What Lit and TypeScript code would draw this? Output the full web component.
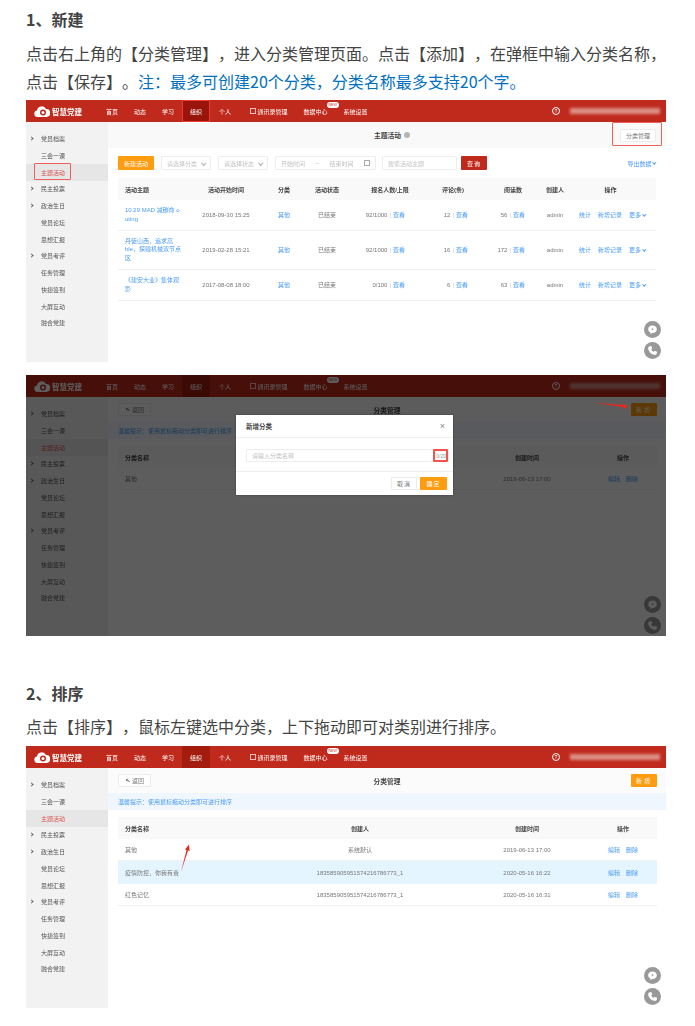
import { LitElement, html, css, svg } from "lit";
import { customElement } from "lit/decorators.js";

const MENU = [
  ["党员档案", 1], ["三会一课", 0], ["主题活动", 0], ["民主投票", 1], ["政治生日", 1], ["党员论坛", 0],
  ["思想汇报", 0], ["党员考评", 1], ["任务管理", 0], ["快捷签到", 0], ["大屏互动", 0], ["融合党建", 0],
] as const;

const ACTIVITIES = [
  { title: "10.29 MAD 减碳命 o\nuting", time: "2018-09-30 15:25", sign: "92/1000", c: "12", r: "56", cls: "h1" },
  { title: "丹徒山西，追求高\nble，探验机械双节点\n区", time: "2019-02-28 15:21", sign: "92/1000", c: "16", r: "172", cls: "h2" },
  { title: "《建安大业》集体观\n影", time: "2017-08-08 18:00", sign: "0/100", c: "6", r: "63", cls: "h3" },
];

@customElement("app-root")
export class AppRoot extends LitElement {
  static styles = css`
    :host { display: block; background: #fff; color: #333; font-family: "Liberation Sans", "Noto Sans CJK SC", sans-serif; }
    .page { padding: 5px 29px 18px 26px; width: 640px; }
    h3 { margin: 0; font-size: 16px; line-height: 28px; font-weight: 700; color: #444; font-family: "Noto Sans CJK SC", sans-serif; }
    h3.second { margin-top: 43px; }
    p { margin: 6px 0 0; font-size: 16px; line-height: 28px; color: #444; white-space: nowrap; font-family: "Noto Sans CJK SC", sans-serif; font-weight: 400; text-spacing-trim: space-all; }
    p.second { margin-top: 5px; }
    p span { color: #0070c0; }

    .shot { position: relative; width: 640px; height: 262px; overflow: hidden; font-size: 6px; color: #666; background: #fff; }
    .shot.one { margin-top: 5px; }
    .shot.two { margin-top: 13px; height: 261px; }
    .shot.three { margin-top: 6px; }
    .app { height: 100%; display: flex; flex-direction: column; filter: blur(0.5px); text-spacing-trim: space-all; }

    .top { height: 22px; flex: none; display: flex; align-items: stretch; background: #bf2a1c; color: #fff; }
    .brand { width: 72px; flex: none; display: flex; align-items: center; gap: 2px; padding-left: 8px; box-sizing: border-box; font-size: 7.5px; font-weight: 700; }
    .brand svg { width: 16px; height: 13px; flex: none; }
    .nav { padding: 0 8px; display: flex; align-items: center; position: relative; white-space: nowrap; }
    .nav.active { background: #a41c0e; }
    .nav.boxed { box-shadow: inset 0 0 0 1px #ee3b33; background: #99140a; }
    .nav.after { margin-left: 1px; }
    .nav.contacts { margin-left: 3px; gap: 2px; }
    .sq { width: 3.5px; height: 3.5px; border: 0.5px solid #fff; opacity: 0.7; }
    .new { position: absolute; right: -3px; top: 2px; width: 12px; height: 6px; border-radius: 3px; background: #fff; color: #d33; font-size: 3.5px; line-height: 6px; text-align: center; }
    .user { margin-left: auto; display: flex; align-items: center; gap: 10px; padding-right: 6px; }
    .help { width: 6px; height: 6px; border: 0.7px solid #fff; border-radius: 50%; font-size: 5px; line-height: 6px; text-align: center; }
    .redact { width: 90px; height: 6px; background: #dd8f86; filter: blur(1.5px); }

    .body { flex: 1; min-height: 0; display: flex; }
    .side { width: 82px; flex: none; background: #f2f2f2; padding-top: 8.25px; box-sizing: border-box; }
    .item { height: 16.75px; display: flex; align-items: center; padding-left: 4px; position: relative; color: #555; white-space: nowrap; }
    .slot { width: 11px; flex: none; display: flex; }
    .arrow { width: 2px; height: 2px; border-top: 0.7px solid #666; border-right: 0.7px solid #666; transform: rotate(45deg); }
    .item.active { background: #e6e6e6; color: #d9534f; }
    .redbox { position: absolute; border: 1.5px solid #f0605a; border-radius: 1px; box-sizing: border-box; pointer-events: none; }
    .box-menu { left: 8px; top: -1px; width: 37px; height: 17px; }

    .main { flex: 1; min-width: 0; display: flex; flex-direction: column; position: relative; }
    .bar { flex: none; display: grid; grid-template-columns: 1fr auto 1fr; align-items: center; background: #f9f9f9; position: relative; padding: 0 10px; }
    .bar.b1 { height: 26px; }
    .bar.b3 { height: 25px; background: #fbfbfb; }
    .title { font-size: 6.75px; font-weight: 700; color: #444; display: flex; align-items: center; gap: 3px; }
    .dot { width: 6px; height: 6px; border-radius: 50%; background: #b5b5b5; margin-right: -10px; }
    .btn { display: flex; align-items: center; justify-content: center; height: 13px; border-radius: 1px; box-sizing: border-box; white-space: nowrap; }
    .ghost { background: #fff; border: 0.7px solid #ececec; color: #777; }
    .cat { width: 36px; justify-self: end; }
    .back { width: 33px; justify-self: start; margin-top: -1px; gap: 2px; }
    .back svg { width: 5px; height: 5px; }
    .orange { background: #ff9c0f; color: #fff; }
    .add { width: 26px; justify-self: end; margin-right: -1px; margin-top: -1px; letter-spacing: 2px; }
    .box-cat { right: 4px; top: 0; width: 50px; height: 24px; }

    .filters { margin: 8px 10px 0; height: 14px; display: flex; align-items: stretch; }
    .f-new { width: 36px; height: 14px; margin-right: 7px; }
    .input { background: #fff; border: 0.7px solid #ededed; border-radius: 1px; box-sizing: border-box; color: #c2c2c2; display: flex; align-items: center; justify-content: space-between; padding: 0 5px; white-space: nowrap; }
    .sel { width: 50px; margin-right: 7px; }
    .date { width: 101px; margin-right: 6px; }
    .cal { width: 4px; height: 4px; border: 0.6px solid #aaa; }
    .kw { width: 75px; margin-right: 4px; }
    .query { width: 26px; height: 14px; background: #bf2a1c; color: #fff; letter-spacing: 1px; }
    .export { margin-left: auto; display: flex; align-items: center; gap: 2px; color: #4a9cf5; }
    .down { width: 1.6px; height: 1.6px; border-right: 0.6px solid currentColor; border-bottom: 0.6px solid currentColor; transform: rotate(45deg); margin-top: -1px; }
    .down.gray { color: #aaa; width: 2.5px; height: 2.5px; }

    .table { margin: 8px 10px 0; }
    .row { display: grid; align-items: center; border-bottom: 0.7px solid #f0f0f0; color: #777; box-sizing: border-box; }
    .t1 { grid-template-columns: 65px 86px 30px 56px 70px 56px 64px 20px 91px; }
    .t3 { grid-template-columns: 137px 210px 124px 68px; }
    .head { height: 22px; background: #f9f9f9; color: #444; font-weight: 700; border-bottom: none; }
    .c { display: flex; justify-content: center; white-space: nowrap; }
    .l { justify-content: flex-start; padding-left: 7px; }
    .h1 { height: 30.5px; } .h2 { height: 39px; } .h3 { height: 31px; }
    .rw { height: 22px; } .rw.sel-row { height: 23px; background: #e5f5ff; border-bottom: none; }
    .link { color: #4a9cf5; }
    .name { white-space: pre-line; line-height: 8.6px; color: #4a9cf5; display: block; padding-left: 7px; }
    .num { justify-content: flex-end; align-items: baseline; gap: 2px; }
    .num.p20 { padding-right: 20px; }
    .num.p13 { padding-right: 13px; }
    .sep { color: #ccc; }
    .ops { justify-content: flex-start; padding-left: 14px; gap: 7px; align-items: center; color: #4a9cf5; }
    .more { display: flex; align-items: center; gap: 2px; }
    .pair { gap: 6px; }

    .tip { flex: none; height: 17px; background: #f0f6fe; display: flex; align-items: center; padding-left: 10px; color: #4a9cf5; white-space: nowrap; }
    .table.t-tight { margin: 7px 9px 0 10px; }

    .float { position: absolute; right: 5px; top: 199px; display: flex; flex-direction: column; gap: 4px; }
    .fab { width: 17px; height: 17px; border-radius: 50%; background: #999; display: flex; align-items: center; justify-content: center; }
    .fab svg { width: 11px; height: 11px; }

    .mask { position: absolute; inset: 0; background: rgba(0, 0, 0, 0.635); }
    .modal { position: absolute; left: 210px; top: 40px; width: 217px; height: 80px; background: #fff; box-shadow: 0 0 2px rgba(0,0,0,.4); display: flex; flex-direction: column; text-spacing-trim: space-all; }
    .m-head { height: 23px; flex: none; display: flex; align-items: center; justify-content: space-between; padding: 0 8px 0 10px; border-bottom: 0.7px solid #eee; box-sizing: border-box; font-weight: 700; font-size: 6.5px; color: #444; }
    .close { font-size: 9px; font-weight: 400; color: #888; line-height: 1; }
    .m-body { height: 34px; flex: none; padding: 11px 4px 0 10px; box-sizing: border-box; border-bottom: 0.7px solid #eee; }
    .m-input { height: 13px; position: relative; padding-right: 2px; }
    .count { color: #999; font-size: 5px; }
    .box-count { right: 0; top: -1px; width: 15px; height: 13px; border: 2px solid #f4524d; }
    .m-foot { flex: 1; display: flex; justify-content: flex-end; align-items: center; gap: 3px; padding-right: 6px; }
    .m-btn { width: 26px; letter-spacing: 1px; }
    .m-ok { width: 27px; }
    .anno { position: absolute; left: 0; top: 0; width: 640px; height: 262px; pointer-events: none; }
  `;

  private top(boxed: boolean) {
    const names = ["首页", "动态", "学习"];
    return html`<div class="top">
      <div class="brand">
        <svg viewBox="0 0 32 26" aria-hidden="true">
          <path fill="#fff" d="M7 24a6.5 6.5 0 0 1-1-12.9A9.5 9.5 0 0 1 24 8a8 8 0 0 1 1 16z"/>
          <circle cx="18" cy="15" r="6" fill="#bf2a1c"/>
          <circle cx="18" cy="15" r="3" fill="#fff"/>
        </svg>
        <span>智慧党建</span>
      </div>
      ${names.map((n) => html`<div class="nav">${n}</div>`)}
      <div class="nav active ${boxed ? "boxed" : ""}">组织</div>
      <div class="nav after">个人</div>
      <div class="nav contacts"><span class="sq"></span>通讯录管理</div>
      <div class="nav">数据中心<span class="new">NEW</span></div>
      <div class="nav">系统设置</div>
      <div class="user"><span class="help">?</span><span class="redact"></span></div>
    </div>`;
  }

  private side(boxed: boolean) {
    return html`<div class="side">
      ${MENU.map(([n, arrow], i) => html`<div class="item ${i === 2 ? "active" : ""}">
        <span class="slot">${arrow ? html`<span class="arrow"></span>` : ""}</span>${n}
        ${i === 2 && boxed ? html`<span class="redbox box-menu"></span>` : ""}
      </div>`)}
    </div>`;
  }

  private fabs() {
    return html`<div class="float">
      <div class="fab"><svg viewBox="0 0 24 24"><path fill="#fff" d="M12 3c5.500 0 9.500 3.600 9.500 8.200s-4 8.200-9.500 8.200h-1l-3.500 3v-4C4.600 16.800 2.500 14.200 2.500 11.200 2.500 6.600 6.500 3 12 3z"/><circle cx="12" cy="11" r="2" fill="#999"/></svg></div>
      <div class="fab"><svg viewBox="0 0 24 24"><path fill="#fff" d="M6 2.500l3.500-.5 2 5.500-2.500 2c1 2.500 3 4.500 5.500 5.500l2-2.500 5.500 2-.5 3.500c-.5 2.500-3 4-5.500 3.500C9 20 4 15 2.500 8c-.5-2.500 1-5 3.500-5.500z"/></svg></div>
    </div>`;
  }

  private activityTable() {
    return html`<div class="table">
      <div class="row head t1">
        <div class="c l">活动主题</div><div class="c">活动开始时间</div><div class="c">分类</div><div class="c">活动状态</div>
        <div class="c">报名人数/上限</div><div class="c">评论(条)</div><div class="c">阅读数</div><div class="c">创建人</div><div class="c">操作</div>
      </div>
      ${ACTIVITIES.map((a) => html`<div class="row t1 ${a.cls}">
        <div class="name">${a.title}</div>
        <div class="c">${a.time}</div>
        <div class="c link">其他</div>
        <div class="c">已结束</div>
        <div class="c num p20">${a.sign}<span class="sep">|</span><span class="link">查看</span></div>
        <div class="c num p13">${a.c}<span class="sep">|</span><span class="link">查看</span></div>
        <div class="c num p20">${a.r}<span class="sep">|</span><span class="link">查看</span></div>
        <div class="c">admin</div>
        <div class="c ops"><span>统计</span><span>新增记录</span><span class="more">更多<span class="down"></span></span></div>
      </div>`)}
    </div>`;
  }

  private categoryMain(rows: { n: string; by: string; at: string; sel?: boolean }[]) {
    return html`<div class="main">
      <div class="bar b3">
        <div class="btn ghost back">
          <svg viewBox="0 0 10 10" aria-hidden="true"><path fill="none" stroke="#555" stroke-width="1.800" d="M8.500 8C8 5.500 6 4 3 4M5 1.500 2.500 4 5 6.500"/></svg>
          <span>返回</span>
        </div>
        <div class="title">分类管理</div>
        <div class="btn orange add">新增</div>
      </div>
      <div class="tip">温馨提示：使用鼠标拖动分类即可进行排序</div>
      <div class="table t-tight">
        <div class="row head t3"><div class="c l">分类名称</div><div class="c">创建人</div><div class="c">创建时间</div><div class="c">操作</div></div>
        ${rows.map((r) => html`<div class="row t3 rw ${r.sel ? "sel-row" : ""}">
          <div class="c l">${r.n}</div><div class="c">${r.by}</div><div class="c">${r.at}</div>
          <div class="c link pair"><span>编辑</span><span>删除</span></div>
        </div>`)}
      </div>
      ${this.fabs()}
    </div>`;
  }

  render() {
    return html`<div class="page" lang="zh-CN">
      <h3>1、新建</h3>
      <p>点击右上角的【分类管理】，进入分类管理页面。点击【添加】，在弹框中输入分类名称，<br />点击【保存】。<span>注：最多可创建20个分类，分类名称最多支持20个字。</span></p>

      <section class="shot one">
        <div class="app">
          ${this.top(true)}
          <div class="body">
            ${this.side(true)}
            <div class="main">
              <div class="bar b1">
                <span></span>
                <div class="title">主题活动<span class="dot"></span></div>
                <div class="btn ghost cat">分类管理</div>
                <span class="redbox box-cat"></span>
              </div>
              <div class="filters">
                <div class="btn orange f-new">新建活动</div>
                <div class="input sel">请选择分类<span class="down gray"></span></div>
                <div class="input sel">请选择状态<span class="down gray"></span></div>
                <div class="input date"><span>开始时间</span><span>~</span><span>结束时间</span><span class="cal"></span></div>
                <div class="input kw">搜索活动主题</div>
                <div class="btn query">查询</div>
                <div class="export">导出数据<span class="down"></span></div>
              </div>
              ${this.activityTable()}
              ${this.fabs()}
            </div>
          </div>
        </div>
      </section>

      <section class="shot two">
        <div class="app">
          ${this.top(false)}
          <div class="body">
            ${this.side(false)}
            ${this.categoryMain([{ n: "其他", by: "系统默认", at: "2019-06-13 17:00" }])}
          </div>
        </div>
        <div class="mask"></div>
        <div class="modal">
          <div class="m-head">新增分类<span class="close">×</span></div>
          <div class="m-body">
            <div class="input m-input">请输入分类名称<span class="count">0/20</span><span class="redbox box-count"></span></div>
          </div>
          <div class="m-foot">
            <div class="btn ghost m-btn">取消</div>
            <div class="btn orange m-btn m-ok">确定</div>
          </div>
        </div>
        <svg class="anno" viewBox="0 0 640 262">${svg`<polygon fill="#e8261c" points="566,27.500 597,30 597,28.500 602,32 597,34 597,32"/>`}</svg>
      </section>

      <h3 class="second">2、排序</h3>
      <p class="second">点击【排序】，鼠标左键选中分类，上下拖动即可对类别进行排序。</p>

      <section class="shot three">
        <div class="app">
          ${this.top(false)}
          <div class="body">
            ${this.side(false)}
            ${this.categoryMain([
              { n: "其他", by: "系统默认", at: "2019-06-13 17:00" },
              { n: "疫情防控，你我有责", by: "183585905951574216786773_1", at: "2020-05-16 16:22", sel: true },
              { n: "红色记忆", by: "183585905951574216786773_1", at: "2020-05-16 16:31" },
            ])}
          </div>
        </div>
        <svg class="anno" viewBox="0 0 640 262">${svg`<polygon fill="#e8261c" points="155,126 160.500,104 159,103.500 163,98.500 163.500,105 162,104.500"/>`}</svg>
      </section>
    </div>`;
  }
}
